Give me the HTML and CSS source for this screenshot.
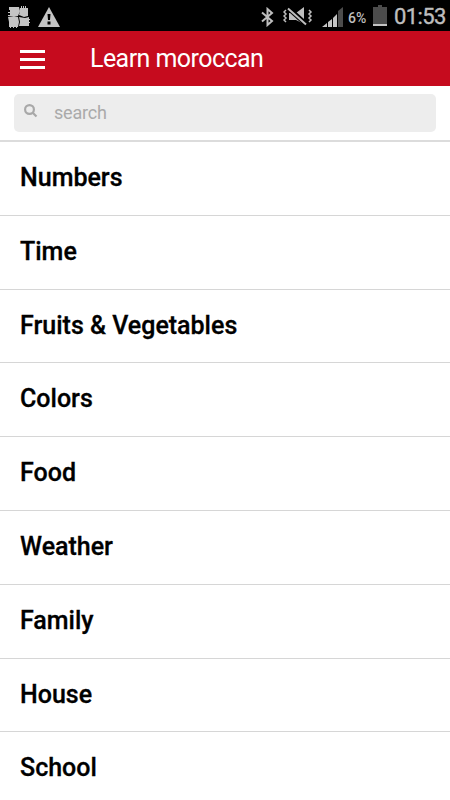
FILE: index.html
```html
<!DOCTYPE html>
<html lang="en">
<head>
    <meta charset="UTF-8">
    <meta name="viewport" content="width=device-width, initial-scale=1.0">
    <title>Learn moroccan</title>
    <link rel="stylesheet" href="styles.css">
</head>
<body>
    <!-- Status bar -->
    <div class="status-bar">
        <svg class="icon-app" width="22" height="22" viewBox="0 0 22 22">
            <path d="M1 1h10l1 4-2 5H0V9h2V7H0V6h2V4H1zM12 2h1V0h1v2h1V0h1v2h1V0h1v2h2v8l-4 1-5-2 1-4zM0 11l6-1 4 1 1 5-1 5H9v1H8v-1H6v1H5v-1H3v1H2v-1H1v-5zM11 11l6 1 4-1v2h1v1h-1v2h1v1h-1v3H11l1-4z"/>
        </svg>
        <svg class="icon-warning" width="22" height="20" viewBox="0 0 22 20">
            <path d="M11 0L22 20H0z"/>
            <path class="cutout" d="M9.500 7h3l-.5 6h-2zM9.500 14.500h3v3h-3z"/>
        </svg>
        <div class="status-right">
            <svg class="icon-bluetooth" width="14" height="20" viewBox="0 0 14 20">
                <path d="M1 5.500L11 14l-4.500 4v-16L11 6 1 14.500"/>
            </svg>
            <svg class="icon-mute" width="30" height="20" viewBox="0 0 30 20">
                <path class="fill" d="M6 6h7l8-6v17l-8-4H6z"/>
                <path class="gap" d="M4 0l20 18"/>
                <path class="slash" d="M5 1.500L23 17.500"/>
                <path class="wave" d="M3 3L1 5l2 2-2 2 2 2-2 2 2 2M26 3l2 2-2 2 2 2-2 2 2 2-2 2"/>
            </svg>
            <svg class="icon-signal" width="22" height="21" viewBox="0 0 22 21">
                <path class="fill" d="M0 20l5-4v4zM6 15l4-3v8H6zM11 11l4-4v13h-4z"/>
                <path class="dim" d="M16 4l5-4v20h-5z"/>
            </svg>
            <span class="battery-level">6%</span>
            <svg class="icon-battery" width="14" height="21" viewBox="0 0 14 21">
                <path class="dim" d="M5 0h4v2h5v17H0V2h5z"/>
                <path class="fill" d="M0 19h14v2H0z"/>
            </svg>
            <span class="clock">01:53</span>
        </div>
    </div>

    <!-- Header -->
    <header class="header">
        <button class="menu-btn" aria-label="Menu">
            <span></span>
            <span></span>
            <span></span>
        </button>
        <h1>Learn moroccan</h1>
    </header>

    <!-- Search -->
    <div class="search-bar">
        <label class="search-box">
            <svg class="icon-search" width="14" height="14" viewBox="0 0 14 14">
                <circle cx="5.500" cy="5.500" r="4.400"/>
                <path d="M9 9l3.500 3.500"/>
            </svg>
            <input type="text" placeholder="search">
        </label>
    </div>

    <!-- Categories -->
    <ul class="category-list">
        <li>Numbers</li>
        <li>Time</li>
        <li>Fruits &amp; Vegetables</li>
        <li>Colors</li>
        <li>Food</li>
        <li>Weather</li>
        <li>Family</li>
        <li>House</li>
        <li>School</li>
    </ul>
</body>
</html>
```
FILE: styles.css
```css
* {
    margin: 0;
    padding: 0;
    box-sizing: border-box;
}

body {
    height: 100vh;
    background: #fff;
    font-family: Roboto, sans-serif;
    overflow: hidden;
}

/* Status bar */
.status-bar {
    display: flex;
    align-items: center;
    height: 31px;
    padding: 2px 4px 0 8px;
    background: #000;
    color: #bebebe;
    fill: #c4c4c4;
}

.status-bar svg {
    flex-shrink: 0;
}

.icon-warning {
    margin-left: 8px;
}

.icon-warning .cutout {
    fill: #000;
}

.status-right {
    display: flex;
    align-items: center;
    margin-left: auto;
}

.icon-bluetooth {
    margin-right: 8px;
    fill: none;
    stroke: #bebebe;
    stroke-width: 2;
}

.icon-mute {
    margin-right: 9px;
    fill: none;
    stroke: #bebebe;
}

.icon-mute .fill {
    fill: #bebebe;
    stroke: none;
}

.icon-mute .gap {
    stroke: #000;
    stroke-width: 5;
}

.icon-mute .slash {
    stroke-width: 2;
}

.icon-mute .wave {
    stroke-width: 1.5;
}

.icon-signal {
    margin-top: 2px;
}

.dim {
    fill: #4c4c4c;
}

.battery-level {
    width: 20px;
    margin: 2px 5px 0 4px;
    font-size: 14px;
    font-weight: 500;
    line-height: 20px;
}

.icon-battery {
    margin-top: -2px;
}

.clock {
    width: 52px;
    margin-left: 7px;
    font-size: 22px;
    line-height: 26px;
    letter-spacing: -0.6px;
    white-space: nowrap;
    -webkit-text-stroke: 0.4px #bebebe;
}

/* Header */
.header {
    display: flex;
    align-items: center;
    height: 55px;
    padding-left: 20px;
    background: #c60b1e;
}

.menu-btn {
    display: flex;
    flex-direction: column;
    gap: 5px;
    width: 25px;
    margin-top: 1px;
    border: none;
    background: none;
    cursor: pointer;
}

.menu-btn span {
    width: 25px;
    height: 3px;
    background: #fff;
}

.header h1 {
    margin-left: 45px;
    color: #fff;
    font-size: 25px;
    font-weight: 400;
    letter-spacing: -0.55px;
}

/* Search */
.search-bar {
    height: 56px;
    padding: 8px 14px 0;
    border-bottom: 2px solid #dcdcdc;
}

.search-box {
    display: flex;
    align-items: center;
    height: 38px;
    padding-left: 10px;
    border-radius: 5px;
    background: #ededed;
}

.icon-search {
    margin-top: -4px;
    fill: none;
    stroke: #a8a8a8;
    stroke-width: 2.2;
}

.search-box input {
    flex: 1;
    margin: -2px 0 0 16px;
    border: none;
    outline: none;
    background: none;
    font-family: inherit;
    font-size: 18px;
    letter-spacing: -0.2px;
}

.search-box input::placeholder {
    color: #aaa;
}

/* Categories */
.category-list {
    list-style: none;
}

.category-list li {
    height: 73.8px;
    padding-left: 20px;
    border-bottom: 1px solid #d6d6d6;
    color: #000;
    font-size: 25px;
    font-weight: 500;
    line-height: 71px;
    -webkit-text-stroke: 0.3px #000;
}
```
